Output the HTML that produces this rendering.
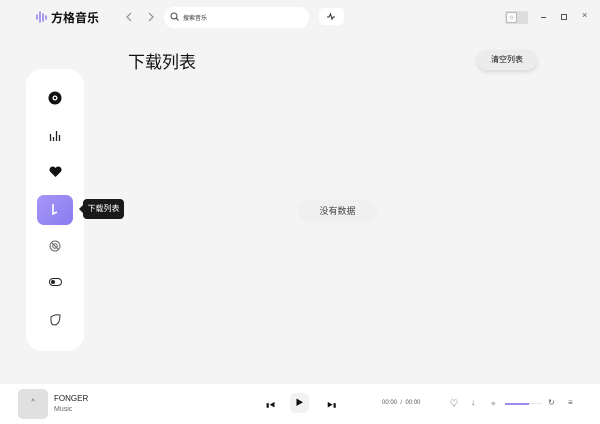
<!DOCTYPE html>
<html><head><meta charset="utf-8"><style>
*{margin:0;padding:0;box-sizing:border-box}
body{width:600px;height:424px;overflow:hidden;background:#f4f4f4;font-family:"Liberation Sans","Noto Sans CJK SC",sans-serif;position:relative;color:#111}
.a{position:absolute}
.side{left:26px;top:69px;width:58px;height:282px;background:#fff;border-radius:16px}
.footer{left:0;top:384px;width:600px;height:40px;background:#fff}
</style></head><body>
<div class="a" style="left:36px;top:10px;width:10px;height:12px">
<svg width="12" height="12" viewBox="0 0 12 12"><g stroke="#8b7cf0" stroke-width="1.5" stroke-linecap="round"><path d="M1 4v4M4 1v10M7 3v7M10 5v3"/></g></svg></div>
<div class="a" style="left:51px;top:9px;font-size:12px;font-weight:bold">方格音乐</div>
<svg class="a" style="left:125px;top:12px" width="8" height="10"><path d="M6 1L2 5l4 4" stroke="#888" fill="none" stroke-width="1.1"/></svg>
<svg class="a" style="left:147px;top:12px" width="8" height="10"><path d="M2 1l4 4-4 4" stroke="#888" fill="none" stroke-width="1.1"/></svg>
<div class="a" style="left:164px;top:7px;width:145px;height:21px;background:#fff;border-radius:10px"></div>
<svg class="a" style="left:170px;top:12px" width="9" height="9" viewBox="0 0 9 9"><circle cx="4" cy="4" r="3" fill="none" stroke="#444"/><path d="M6 6l2.5 2.5" stroke="#444"/></svg>
<div class="a" style="left:183px;top:13px;font-size:6px;color:#333">搜索音乐</div>
<div class="a" style="left:319px;top:8px;width:25px;height:17px;background:#fff;border-radius:5px"></div>
<svg class="a" style="left:326px;top:12px" width="10" height="9"><path d="M1 5h2l1.5-3 1.5 5 1.2-2H9" stroke="#333" fill="none" stroke-width="1.1"/></svg>
<div class="a" style="left:505px;top:11px;width:23px;height:13px;background:#ddd;border-radius:2px"></div>
<div class="a" style="left:506px;top:12px;width:11px;height:11px;background:#fafafa;border:1px solid #bbb;border-radius:2px;font-size:7px;text-align:center;line-height:9px;color:#999">☼</div>
<div class="a" style="left:541px;top:17px;width:5px;height:1px;background:#555"></div>
<div class="a" style="left:561px;top:14px;width:6px;height:6px;border:1px solid #555"></div>
<div class="a" style="left:582px;top:10px;font-size:9px;color:#555">×</div>
<div class="a" style="left:128px;top:48px;font-size:17px">下载列表</div>
<div class="a" style="left:477px;top:50px;width:60px;height:20px;background:#ececec;border-radius:10px;font-size:8px;text-align:center;line-height:20px;box-shadow:0 2px 4px rgba(0,0,0,.12)">清空列表</div>
<div class="a side"></div>
<svg class="a" style="left:48px;top:91px" width="14" height="14"><circle cx="7" cy="7" r="6.5" fill="#111"/><circle cx="7" cy="7" r="2.5" fill="#fff"/><circle cx="7" cy="7" r="1.2" fill="#111"/></svg>
<svg class="a" style="left:49px;top:129px" width="12" height="12"><g stroke="#222" stroke-width="1.3"><path d="M1.5 5v7M4.5 8v4M7.5 2v10M10.5 6v6"/></g></svg>
<svg class="a" style="left:49px;top:166px" width="13" height="12" viewBox="0 0 13 12"><path d="M6.5 11L1 5.5A3 3 0 0 1 6.5 2a3 3 0 0 1 5.5 3.5z" fill="#111"/></svg>
<div class="a" style="left:37px;top:195px;width:36px;height:30px;border-radius:7px;background:linear-gradient(135deg,#a596f7,#8b7cf0)"></div>
<svg class="a" style="left:50px;top:203px" width="10" height="14"><path d="M3 1v10l4-2" stroke="#fff" stroke-width="1.6" fill="none"/></svg>
<div class="a" style="top:205px;width:0;height:0;border:4px solid transparent;border-right-color:#1a1a1a;left:75px"></div>
<div class="a" style="left:83px;top:199px;width:41px;height:20px;background:#1a1a1a;border-radius:4px;color:#fff;font-size:8px;line-height:20px;text-align:center">下载列表</div>
<svg class="a" style="left:49px;top:240px" width="12" height="12"><circle cx="6" cy="6" r="5" fill="none" stroke="#666"/><circle cx="6" cy="6" r="2.3" fill="none" stroke="#666"/><path d="M3 3l6 6" stroke="#666"/></svg>
<svg class="a" style="left:49px;top:278px" width="13" height="9"><rect x=".5" y=".5" width="12" height="7" rx="3.5" fill="none" stroke="#222"/><circle cx="4" cy="4" r="2" fill="#222"/></svg>
<svg class="a" style="left:49px;top:314px" width="12" height="12"><path d="M2 3Q6 0 11 1Q11 10 6 11Q2 11 2 7z" fill="none" stroke="#333"/></svg>
<div class="a" style="left:298px;top:200px;width:79px;height:23px;background:#f0f0f0;border-radius:11px;font-size:9px;text-align:center;line-height:23px;color:#444">没有数据</div>
<div class="a footer"></div>
<div class="a" style="left:18px;top:389px;width:30px;height:30px;background:#e0e0e0;border-radius:5px;font-size:7px;text-align:center;line-height:28px;color:#555">^</div>
<div class="a" style="left:54px;top:394px;font-size:8px;color:#222">FONGER</div>
<div class="a" style="left:54px;top:406px;font-size:7px;color:#666">Music</div>
<div class="a" style="left:266px;top:400px;font-size:6px">▮◀</div>
<div class="a" style="left:290px;top:393px;width:19px;height:20px;background:#f2f2f2;border-radius:5px;font-size:8px;text-align:center;line-height:20px">▶</div>
<div class="a" style="left:327px;top:400px;font-size:6px">▶▮</div>
<div class="a" style="left:382px;top:400px;font-size:6px;color:#555">00:00 &nbsp;/ &nbsp;00:00</div>
<div class="a" style="left:450px;top:398px;font-size:8px;color:#555">♡</div>
<div class="a" style="left:471px;top:398px;font-size:8px;color:#555">↓</div>
<div class="a" style="left:491px;top:400px;font-size:6px;color:#aaa">◈</div>
<div class="a" style="left:505px;top:403px;width:37px;height:1px;background:#e4e4e4"></div>
<div class="a" style="left:505px;top:403px;width:24px;height:1.5px;background:#9a8cf0"></div>
<div class="a" style="left:548px;top:398px;font-size:8px;color:#555">↻</div>
<div class="a" style="left:568px;top:398px;font-size:8px;color:#555">≡</div>
</body></html>
